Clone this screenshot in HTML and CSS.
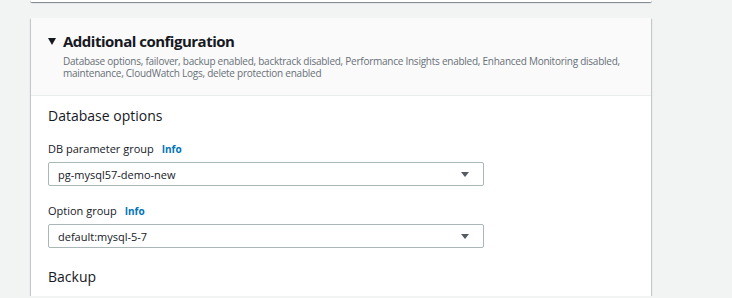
FILE: index.html
```html
<!DOCTYPE html>
<html lang="en">
<head>
    <meta charset="UTF-8">
    <title>Additional configuration</title>
    <link rel="stylesheet" href="styles.css">
</head>
<body>
    <div class="page">
        <div class="card card-prev"></div>

        <div class="card">
            <div class="card-header">
                <span class="caret"></span>
                <div class="header-text">
                    <h2>Additional configuration</h2>
                    <p class="desc">Database options, failover, backup enabled, backtrack disabled, Performance Insights enabled, Enhanced Monitoring disabled, maintenance, CloudWatch Logs, delete protection enabled</p>
                </div>
            </div>

            <div class="card-body">
                <h3>Database options</h3>

                <div class="form-group">
                    <label>DB parameter group <a class="info">Info</a></label>
                    <div class="select">
                        <span>pg-mysql57-demo-new</span>
                        <span class="arrow"></span>
                    </div>
                </div>

                <div class="form-group">
                    <label>Option group <a class="info">Info</a></label>
                    <div class="select">
                        <span>default:mysql-5-7</span>
                        <span class="arrow"></span>
                    </div>
                </div>

                <h3 class="section-next">Backup</h3>
            </div>
        </div>
    </div>
</body>
</html>
```

FILE: styles.css
```css
body {
    margin: 0;
    background-color: #f2f3f3;
    font-family: "Open Sans", "Noto Sans", sans-serif;
    color: #16191f;
}

.page {
    padding-left: 31px;
    width: 620px;
}

.card {
    background-color: #ffffff;
    box-shadow: 0 1px 1px 0 rgba(0, 28, 36, 0.3), 1px 1px 1px 0 rgba(0, 28, 36, 0.15), -1px 1px 1px 0 rgba(0, 28, 36, 0.15);
}

.card-prev {
    height: 2px;
    margin-bottom: 16px;
}

.card-header {
    display: flex;
    background-color: #fafafa;
    padding: 13px 17px 16px;
    border-bottom: 1px solid #eaeded;
}

.caret {
    width: 0;
    height: 0;
    margin-top: 7px;
    margin-right: 7px;
    border-left: 4px solid transparent;
    border-right: 4px solid transparent;
    border-top: 7px solid #16191f;
}

h2 {
    margin: 0;
    font-size: 15px;
    line-height: 20px;
    font-weight: 700;
    letter-spacing: -0.5px;
}

.desc {
    margin: 4px 0 0;
    font-size: 10px;
    line-height: 12px;
    letter-spacing: -0.25px;
    color: #687078;
}

.card-body {
    padding: 10px 17px 9px;
}

h3 {
    margin: 0;
    font-size: 14px;
    line-height: 20px;
    font-weight: 400;
}

.form-group {
    margin-top: 15px;
}

.form-group + .form-group {
    margin-top: 17px;
}

label {
    display: block;
    font-size: 11px;
    line-height: 16px;
    margin-bottom: 5px;
}

.info {
    margin-left: 5px;
    font-size: 10px;
    font-weight: 700;
    color: #0073bb;
}

.select {
    display: flex;
    align-items: center;
    justify-content: space-between;
    box-sizing: border-box;
    width: 436px;
    height: 24px;
    padding: 0 9px;
    border: 1px solid #aab7b8;
    border-radius: 2px;
    font-size: 11px;
}

.arrow {
    width: 0;
    height: 0;
    margin-right: 5px;
    border-left: 4px solid transparent;
    border-right: 4px solid transparent;
    border-top: 5px solid #545b64;
}

.section-next {
    margin-top: 19px;
}
```
